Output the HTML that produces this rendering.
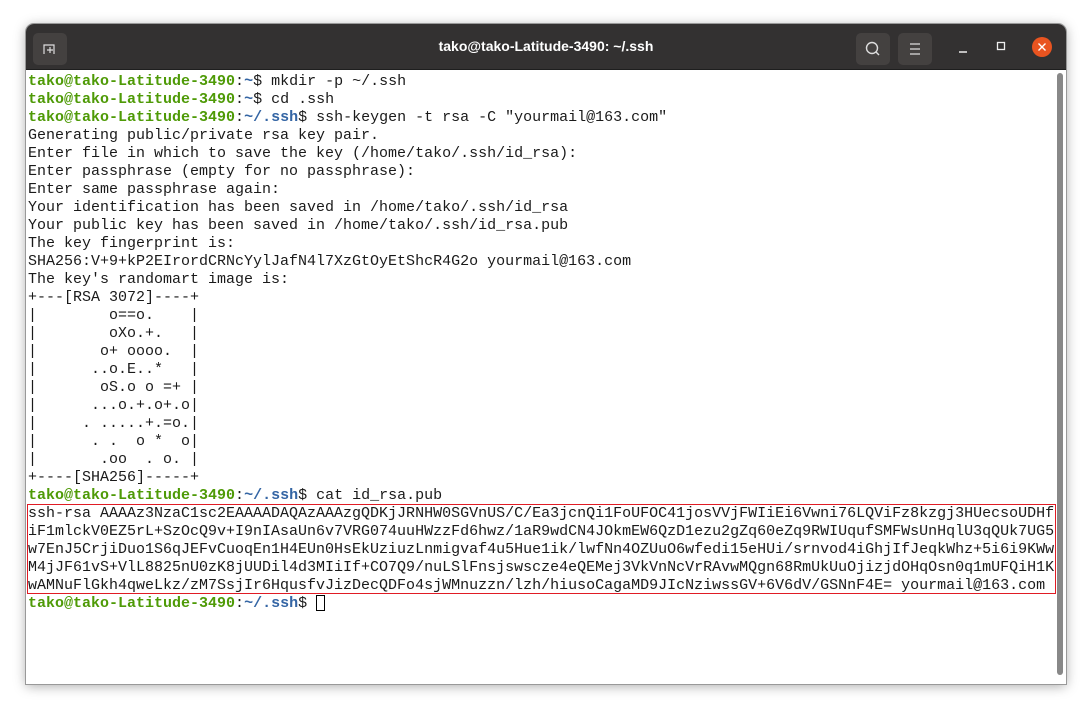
<!DOCTYPE html>
<html><head><meta charset="utf-8"><style>
body{margin:0;width:1092px;height:713px;background:#fff;position:relative;overflow:hidden;font-family:"Liberation Sans",sans-serif}
.win{position:absolute;left:26px;top:24px;width:1040px;height:660px;background:#fff;border-radius:8px 8px 0 0;box-shadow:0 2px 12px rgba(0,0,0,.35);overflow:hidden;outline:1px solid #999}
.tb{position:absolute;left:0;top:0;width:1040px;height:45px;background:#333131;border-bottom:1px solid #1e1e1e}
.title{position:absolute;left:0;right:0;top:14px;text-align:center;color:#fff;font-weight:bold;font-size:14px}
.btn{position:absolute;top:9px;width:34px;height:32px;background:#444140;border-radius:5px}
pre{position:absolute;left:2px;top:49px;margin:0;font-family:"Liberation Mono",monospace;font-size:15px;line-height:18px;color:#1a1a1a;letter-spacing:0}
.g{color:#4e9a06;font-weight:bold}.b{color:#3465a4;font-weight:bold}
.box{position:absolute;left:1px;top:480px;width:1027px;height:88px;border:1px solid #e01b24}
.sb{position:absolute;left:1031px;top:49px;width:6px;height:602px;background:#888;border-radius:3px}
.cur{display:inline-block;width:9px;height:16px;border:1px solid #000;vertical-align:-4px;box-sizing:border-box}
</style></head><body>
<div class="win">
<div class="tb">
<div class="btn" style="left:7px"><svg width="34" height="32"><path d="M11 21V12H21V21M17 14v6M14 17h6" stroke="#ddd" stroke-width="1.2" fill="none"/></svg></div>
<div class="title">tako@tako-Latitude-3490: ~/.ssh</div>
<div class="btn" style="left:830px"><svg width="34" height="32"><circle cx="16" cy="15" r="5.5" stroke="#ddd" stroke-width="1.4" fill="none"/><path d="M20 19l3 3" stroke="#ddd" stroke-width="1.4"/></svg></div>
<div class="btn" style="left:872px"><svg width="34" height="32"><path d="M12 11h10M12 16h10M12 21h10" stroke="#ddd" stroke-width="1.3"/></svg></div>
<svg style="position:absolute;left:930px;top:12px" width="30" height="24"><path d="M3 16h8" stroke="#eee" stroke-width="1.5"/></svg>
<svg style="position:absolute;left:968px;top:12px" width="20" height="24"><rect x="3.5" y="6.5" width="7" height="7" stroke="#eee" stroke-width="1.3" fill="none"/></svg>
<svg style="position:absolute;left:1005px;top:12px" width="22" height="22"><circle cx="11" cy="11" r="10" fill="#e95420"/><path d="M7.5 7.5l7 7M14.5 7.5l-7 7" stroke="#fff" stroke-width="1.4"/></svg>
</div>
<pre><span class="g">tako@tako-Latitude-3490</span>:<span class="b">~</span>$ mkdir -p ~/.ssh
<span class="g">tako@tako-Latitude-3490</span>:<span class="b">~</span>$ cd .ssh
<span class="g">tako@tako-Latitude-3490</span>:<span class="b">~/.ssh</span>$ ssh-keygen -t rsa -C "yourmail@163.com"
Generating public/private rsa key pair.
Enter file in which to save the key (/home/tako/.ssh/id_rsa):
Enter passphrase (empty for no passphrase):
Enter same passphrase again:
Your identification has been saved in /home/tako/.ssh/id_rsa
Your public key has been saved in /home/tako/.ssh/id_rsa.pub
The key fingerprint is:
SHA256:V+9+kP2EIrordCRNcYylJafN4l7XzGtOyEtShcR4G2o yourmail@163.com
The key's randomart image is:
+---[RSA 3072]----+
|        o==o.    |
|        oXo.+.   |
|       o+ oooo.  |
|      ..o.E..*   |
|       oS.o o =+ |
|      ...o.+.o+.o|
|     . .....+.=o.|
|      . .  o *  o|
|       .oo  . o. |
+----[SHA256]-----+
<span class="g">tako@tako-Latitude-3490</span>:<span class="b">~/.ssh</span>$ cat id_rsa.pub
ssh-rsa AAAAz3NzaC1sc2EAAAADAQAzAAAzgQDKjJRNHW0SGVnUS/C/Ea3jcnQi1FoUFOC41josVVjFWIiEi6Vwni76LQViFz8kzgj3HUecsoUDHf
iF1mlckV0EZ5rL+SzOcQ9v+I9nIAsaUn6v7VRG074uuHWzzFd6hwz/1aR9wdCN4JOkmEW6QzD1ezu2gZq60eZq9RWIUqufSMFWsUnHqlU3qQUk7UG5
w7EnJ5CrjiDuo1S6qJEFvCuoqEn1H4EUn0HsEkUziuzLnmigvaf4u5Hue1ik/lwfNn4OZUuO6wfedi15eHUi/srnvod4iGhjIfJeqkWhz+5i6i9KWw
M4jJF61vS+VlL8825nU0zK8jUUDil4d3MIiIf+CO7Q9/nuLSlFnsjswscze4eQEMej3VkVnNcVrRAvwMQgn68RmUkUuOjizjdOHqOsn0q1mUFQiH1K
wAMNuFlGkh4qweLkz/zM7SsjIr6HqusfvJizDecQDFo4sjWMnuzzn/lzh/hiusoCagaMD9JIcNziwssGV+6V6dV/GSNnF4E= yourmail@163.com
<span class="g">tako@tako-Latitude-3490</span>:<span class="b">~/.ssh</span>$ <span class="cur"></span></pre>
<div class="box"></div>
<div class="sb"></div>
</div>
</body></html>
